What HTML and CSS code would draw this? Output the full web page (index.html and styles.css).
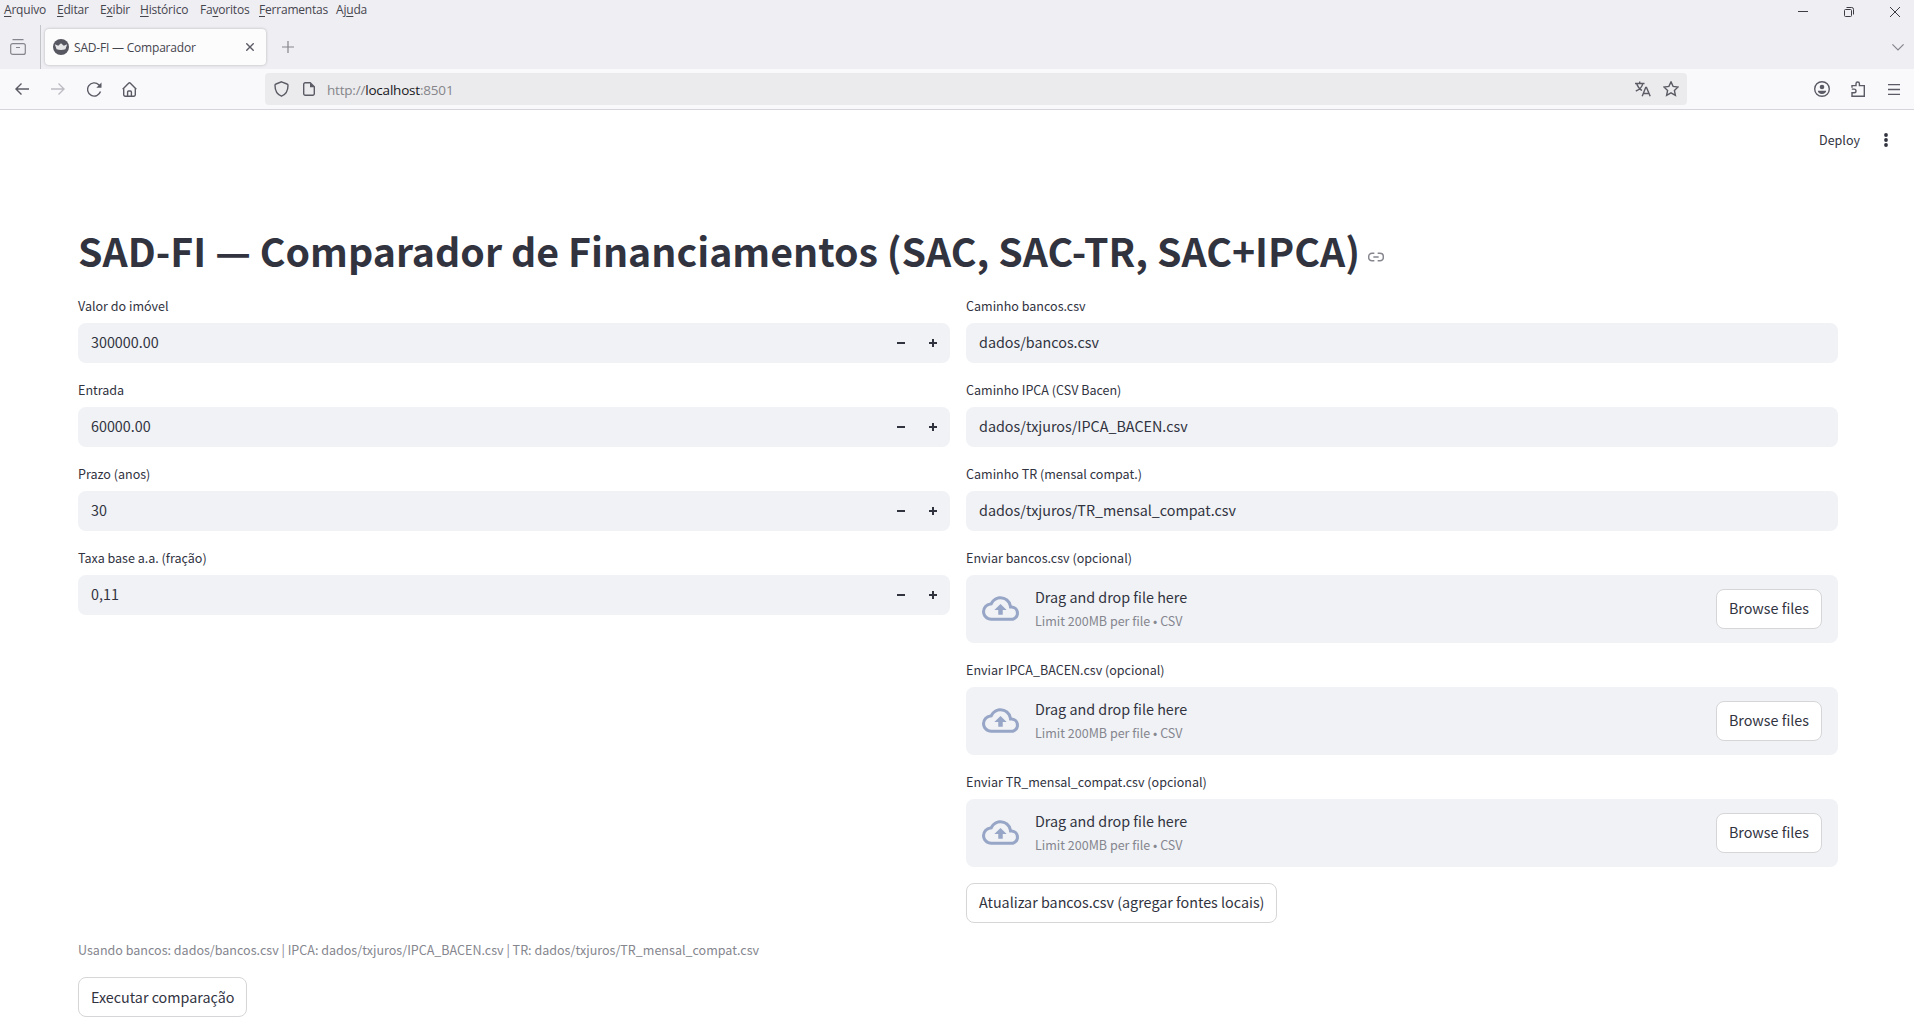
FILE: index.html
```html
<!DOCTYPE html>
<html lang="pt-BR">
<head>
<meta charset="utf-8">
<title>SAD-FI — Comparador</title>
<link rel="stylesheet" href="styles.css">
</head>
<body>
<svg class="defs" aria-hidden="true">
  <symbol id="cloud" viewBox="0 0 24 24"><path fill="currentColor" d="M19.35 10.04A7.49 7.49 0 0012 4C9.11 4 6.6 5.64 5.35 8.04A5.994 5.994 0 000 14c0 3.31 2.69 6 6 6h13c2.76 0 5-2.24 5-5 0-2.64-2.05-4.78-4.65-4.96zM19 18H6c-2.21 0-4-1.79-4-4 0-2.05 1.53-3.76 3.56-3.97l1.07-.11.5-.95A5.469 5.469 0 0112 6c2.62 0 4.88 1.86 5.39 4.43l.3 1.5 1.53.11A2.98 2.98 0 0122 15c0 1.65-1.35 3-3 3zM8 13h2.55v3h2.9v-3H16l-4-4z"/></symbol>
  <symbol id="minus" viewBox="0 0 8 8"><path fill="currentColor" d="M0 3v2h8v-2h-8z"/></symbol>
  <symbol id="plus" viewBox="0 0 8 8"><path fill="currentColor" d="M3 0v3h-3v2h3v3h2v-3h3v-2h-3v-3h-2z"/></symbol>
</svg>

<header class="browser">
  <div class="menubar">
    <nav class="menus">
      <span class="m1"><u>A</u>rquivo</span><span class="m2"><u>E</u>ditar</span><span class="m3">E<u>x</u>ibir</span><span class="m4"><u>H</u>istórico</span><span class="m5">Fa<u>v</u>oritos</span><span class="m6"><u>F</u>erramentas</span><span class="m7">Aj<u>u</u>da</span>
    </nav>
    <div class="window-buttons">
      <svg width="10" height="10" viewBox="0 0 10 10"><path d="M0 4.5h10"/></svg>
      <svg width="10" height="10" viewBox="0 0 10 10"><rect x=".5" y="2.5" width="7" height="7" rx="1"/><path d="M2.5 .5h5.2a1.8 1.8 0 0 1 1.8 1.8v5.200"/></svg>
      <svg width="10" height="10" viewBox="0 0 10 10"><path d="M0 0l10 10M10 0L0 10"/></svg>
    </div>
  </div>
  <div class="tabstrip">
    <div class="view"><svg width="16" height="16" viewBox="0 0 16 16"><path d="M2.500 .6h11M2.700 4.600h10.600a2 2 0 0 1 2 2v6.800a2 2 0 0 1-2 2H2.700a2 2 0 0 1-2-2V6.600a2 2 0 0 1 2-2zM6 8.500h4"/></svg></div>
    <div class="tab">
      <svg class="favicon" width="16" height="16" viewBox="0 0 16 16"><circle cx="8" cy="8" r="8" fill="#565761"/><path d="M1.800 5.200l3.400 1.600L8 4.200l2.800 2.600 3.400-1.600-1.800 5.100q-4.400 1.200-8.800 0z" fill="#e6e6e8"/></svg>
      <span class="tab-title">SAD-FI — Comparador</span>
      <svg class="tab-close" width="8" height="8" viewBox="0 0 8 8"><path d="M.3.3l7.400 7.400M7.700.3L.3 7.700"/></svg>
    </div>
    <svg class="new-tab" width="12" height="12" viewBox="0 0 12 12"><path d="M6 0v12M0 6h12"/></svg>
    <svg class="all-tabs" width="12" height="7" viewBox="0 0 12 7"><path d="M.4.400L6 6 11.600.400"/></svg>
  </div>
  <div class="toolbar">
    <svg class="back" width="14" height="12" viewBox="0 0 14 12"><path d="M14 6H1M6.500.6L1 6l5.500 5.400"/></svg>
    <svg class="forward" width="14" height="12" viewBox="0 0 14 12"><path d="M0 6h13M7.500.6L13 6l-5.500 5.400"/></svg>
    <svg class="reload" width="15" height="15" viewBox="0 0 15 15"><path d="M13.500 9.500a6.600 6.600 0 1 1-1.700-6.800L13 4"/><path class="solid" d="M14.500.6v5.200H9.300z"/></svg>
    <svg class="home" width="15" height="15" viewBox="0 0 15 15"><path d="M.7 7.300L6.600 1.200a1.300 1.300 0 0 1 1.800 0l5.900 6.100M1.700 6.500v6.300a1.500 1.500 0 0 0 1.500 1.500h8.600a1.500 1.500 0 0 0 1.500-1.500V6.500M5.600 14V10a1 1 0 0 1 1-1h1.800a1 1 0 0 1 1 1v4"/></svg>
    <div class="urlbar">
      <svg class="shield" width="15" height="16" viewBox="0 0 15 16"><path d="M7.500.8L13 3a1.500 1.500 0 0 1 1 1.500c0 5-2 8.900-6.500 10.700C3 13.400 1 9.500 1 4.500A1.500 1.500 0 0 1 2 3z"/></svg>
      <svg class="page" width="12" height="14" viewBox="0 0 12 14"><path d="M2.200.7h5l4.100 4.100v7a1.500 1.500 0 0 1-1.500 1.500H2.200a1.500 1.500 0 0 1-1.500-1.500V2.200A1.500 1.500 0 0 1 2.200.7z"/><path class="solid" d="M7 .7v4.500h4.500z"/></svg>
      <span class="url">http://<b>localhost</b>:8501</span>
      <svg class="translate" width="16" height="16" viewBox="0 0 16 16"><path d="M0 2.500h9.500M4.700.4v2M7.800 2.600C7 6 4 8.800.8 10M1.800 3c1 3 3 5.300 5.200 6.500M7.200 15.200l3.500-8.700h.8l3.700 8.700M8.300 12.500h6"/></svg>
      <svg class="star" width="16" height="16" viewBox="0 0 16 16"><path d="M8 .9l2.100 4.500 5 .6-3.700 3.400 1 4.900L8 11.900l-4.400 2.400 1-4.900L.9 6l5-.6z"/></svg>
    </div>
    <svg class="account" width="16" height="16" viewBox="0 0 16 16"><circle cx="8" cy="8" r="7.300"/><circle class="solid" cx="8" cy="6" r="2.300"/><path class="solid" d="M3.800 9.700h8.400c0 2-1.800 3.200-4.200 3.200s-4.200-1.200-4.200-3.200z"/></svg>
    <svg class="extensions" width="14" height="16" viewBox="0 0 14 16"><path d="M1 6.800V4.600h4V2.700a1.700 1.700 0 0 1 3.400 0v1.900h4.900v10.600H1v-3.500h2.200a1.800 1.800 0 0 0 0-3.600H.8"/></svg>
    <svg class="app-menu" width="12" height="11" viewBox="0 0 12 11"><path d="M0 .5h12M0 5.500h12M0 10.500h12"/></svg>
  </div>
</header>

<main class="app">
  <div class="app-header">
    <span class="deploy">Deploy</span>
    <svg width="4" height="14" viewBox="0 0 4 14"><circle cx="2" cy="2" r="1.900"/><circle cx="2" cy="7" r="1.900"/><circle cx="2" cy="12" r="1.900"/></svg>
  </div>
  <div class="content">
    <h1><span>SAD-FI — Comparador de Financiamentos (SAC, SAC-TR, SAC+IPCA)</span><svg class="anchor" width="16" height="16" viewBox="0 0 24 24"><path d="M14.500 6.500H18a5 5 0 0 1 5 5v1a5 5 0 0 1-5 5h-3.500M9.500 17.500H6a5 5 0 0 1-5-5v-1a5 5 0 0 1 5-5h3.500M8 12h8"/></svg></h1>
    <div class="columns">
      <section class="column">
        <div class="field"><label>Valor do imóvel</label><div class="input"><span>300000.00</span><svg><use href="#minus"/></svg><svg><use href="#plus"/></svg></div></div>
        <div class="field"><label>Entrada</label><div class="input"><span>60000.00</span><svg><use href="#minus"/></svg><svg><use href="#plus"/></svg></div></div>
        <div class="field"><label>Prazo (anos)</label><div class="input"><span>30</span><svg><use href="#minus"/></svg><svg><use href="#plus"/></svg></div></div>
        <div class="field"><label>Taxa base a.a. (fração)</label><div class="input"><span>0,11</span><svg><use href="#minus"/></svg><svg><use href="#plus"/></svg></div></div>
      </section>
      <section class="column">
        <div class="field"><label>Caminho bancos.csv</label><div class="input"><span>dados/bancos.csv</span></div></div>
        <div class="field"><label>Caminho IPCA (CSV Bacen)</label><div class="input"><span>dados/txjuros/IPCA_BACEN.csv</span></div></div>
        <div class="field"><label>Caminho TR (mensal compat.)</label><div class="input"><span>dados/txjuros/TR_mensal_compat.csv</span></div></div>
        <div class="field"><label>Enviar bancos.csv (opcional)</label><div class="dropzone"><svg><use href="#cloud"/></svg><div class="hint"><span>Drag and drop file here</span><small>Limit 200MB per file • CSV</small></div><button>Browse files</button></div></div>
        <div class="field"><label>Enviar IPCA_BACEN.csv (opcional)</label><div class="dropzone"><svg><use href="#cloud"/></svg><div class="hint"><span>Drag and drop file here</span><small>Limit 200MB per file • CSV</small></div><button>Browse files</button></div></div>
        <div class="field"><label>Enviar TR_mensal_compat.csv (opcional)</label><div class="dropzone"><svg><use href="#cloud"/></svg><div class="hint"><span>Drag and drop file here</span><small>Limit 200MB per file • CSV</small></div><button>Browse files</button></div></div>
        <button class="update">Atualizar bancos.csv (agregar fontes locais)</button>
      </section>
    </div>
    <p class="caption">Usando bancos: dados/bancos.csv | IPCA: dados/txjuros/IPCA_BACEN.csv | TR: dados/txjuros/TR_mensal_compat.csv</p>
    <button class="run">Executar comparação</button>
  </div>
</main>
</body>
</html>
```
FILE: styles.css
```css
* { box-sizing: border-box; }
body { margin: 0; height: 1018px; overflow: hidden; background: #fff; color: #31333f; font-family: "Noto Sans CJK JP", "Noto Sans CJK SC", sans-serif; font-size: 14.33px; }
.defs { display: none; }
svg { flex: none; }

/* Browser window */
.browser { height: 110px; background: #efeef3; font-family: "Open Sans", "Noto Sans", sans-serif; font-size: 12px; color: #45454e; border-bottom: 1px solid #d5d5da; }
.browser svg { fill: none; stroke: #5b5b66; stroke-width: 1.4; }
.browser .solid { fill: #5b5b66; stroke: none; }
.menubar { height: 25px; display: flex; justify-content: space-between; }
.menus { display: flex; padding-left: 4px; line-height: 20px; white-space: nowrap; }
.menus span { letter-spacing: -.2px; }
.menus u { text-underline-offset: 1.500px; text-decoration-thickness: 1px; }
.m1 { width: 53px; } .m2 { width: 43px; } .m3 { width: 40px; } .m4 { width: 60px; } .m5 { width: 59px; } .m6 { width: 77px; }
.window-buttons { display: flex; gap: 36px; padding: 7px 14px 0 0; }
.browser .window-buttons svg { stroke: #3c3c44; stroke-width: 1; overflow: visible; }
.tabstrip { height: 44px; display: flex; align-items: center; }
.view { width: 41px; height: 44px; padding: 14px 0 0 10px; border-right: 1px solid #c3c3ca; }
.browser .view svg, .browser .all-tabs, .browser .new-tab { stroke: #85858d; stroke-width: 1.200; }
.tab { width: 221px; height: 36px; margin: 0 16px 0 4px; padding: 0 12px 0 8px; display: flex; align-items: center; background: #fcfcfd; border-radius: 4px; box-shadow: 0 0 3px rgba(0,0,0,.25); }
.browser .favicon { stroke: none; }
.tab-title { flex: 1; margin-left: 5px; padding-top: 1px; letter-spacing: -.2px; white-space: nowrap; }
.all-tabs { margin: 0 10px 0 auto; }
.toolbar { height: 40px; display: flex; align-items: center; background: #f9f9fb; padding-left: 15px; }
.browser .forward { margin-left: 22px; stroke: #bcbcc3; }
.reload { margin-left: 22px; } .home { margin-left: 20px; }
.urlbar { width: 1422px; height: 32px; margin-left: 128px; padding: 0 8px 0 9px; display: flex; align-items: center; background: #ebebed; border-radius: 4px; }
.page { margin-left: 14px; }
.url { flex: 1; margin-left: 12px; padding-top: 1px; font-size: 13.500px; color: #85858a; letter-spacing: -.2px; }
.url b { font-weight: 400; color: #17171c; }
.star { margin-left: 12px; }
.account { margin-left: 127px; } .extensions { margin-left: 21px; } .app-menu { margin-left: 23px; }

/* Application */
.app-header { height: 60px; display: flex; align-items: center; justify-content: flex-end; gap: 24px; padding-right: 26px; font-size: 12.540px; }
.deploy { padding-bottom: 2px; }
.app-header svg { fill: #31333f; }
.content { width: 1760px; margin-left: 78px; padding-top: 52px; }
h1 { margin: 0; height: 73px; padding-top: 1px; display: flex; align-items: flex-start; font-size: 39.290px; font-weight: 700; line-height: 53px; white-space: nowrap; }
.anchor { margin: 26px 0 0 8px; fill: none; stroke: #85868e; stroke-width: 2.200; }
.columns { display: grid; grid-template-columns: 1fr 1fr; gap: 16px; }
.column { display: flex; flex-direction: column; align-items: stretch; gap: 16px; }
label { display: block; height: 28px; font-size: 12.540px; line-height: 22px; }
.input { height: 40px; display: flex; align-items: center; border-radius: 8px; background: #f0f2f6; padding: 0 13px; }
.input span { flex: 1; padding-bottom: 3px; }
.input svg { width: 8px; height: 8px; margin-left: 24px; }
.dropzone { height: 68px; display: flex; align-items: center; border-radius: 8px; background: #f0f2f6; padding: 0 16px; color: #31333f; }
.dropzone svg { width: 37px; height: 37px; margin-bottom: 2px; color: #97a6c6; }
.hint { flex: 1; display: flex; flex-direction: column; margin-left: 16px; line-height: 22px; }
.hint small { margin-top: 2px; font-size: 12.540px; color: #85868e; line-height: 22px; }
button { height: 40px; padding: 0 12px 2px; border: 1px solid #d6d6d9; border-radius: 8px; background: #fff; color: inherit; font: inherit; white-space: nowrap; }
.dropzone button { margin-bottom: 1px; }
.update { align-self: flex-start; padding-bottom: 3px; }
.caption { margin: 16px 0; height: 22px; line-height: 22px; font-size: 12.540px; color: #85868e; }
.run { display: block; }
```
